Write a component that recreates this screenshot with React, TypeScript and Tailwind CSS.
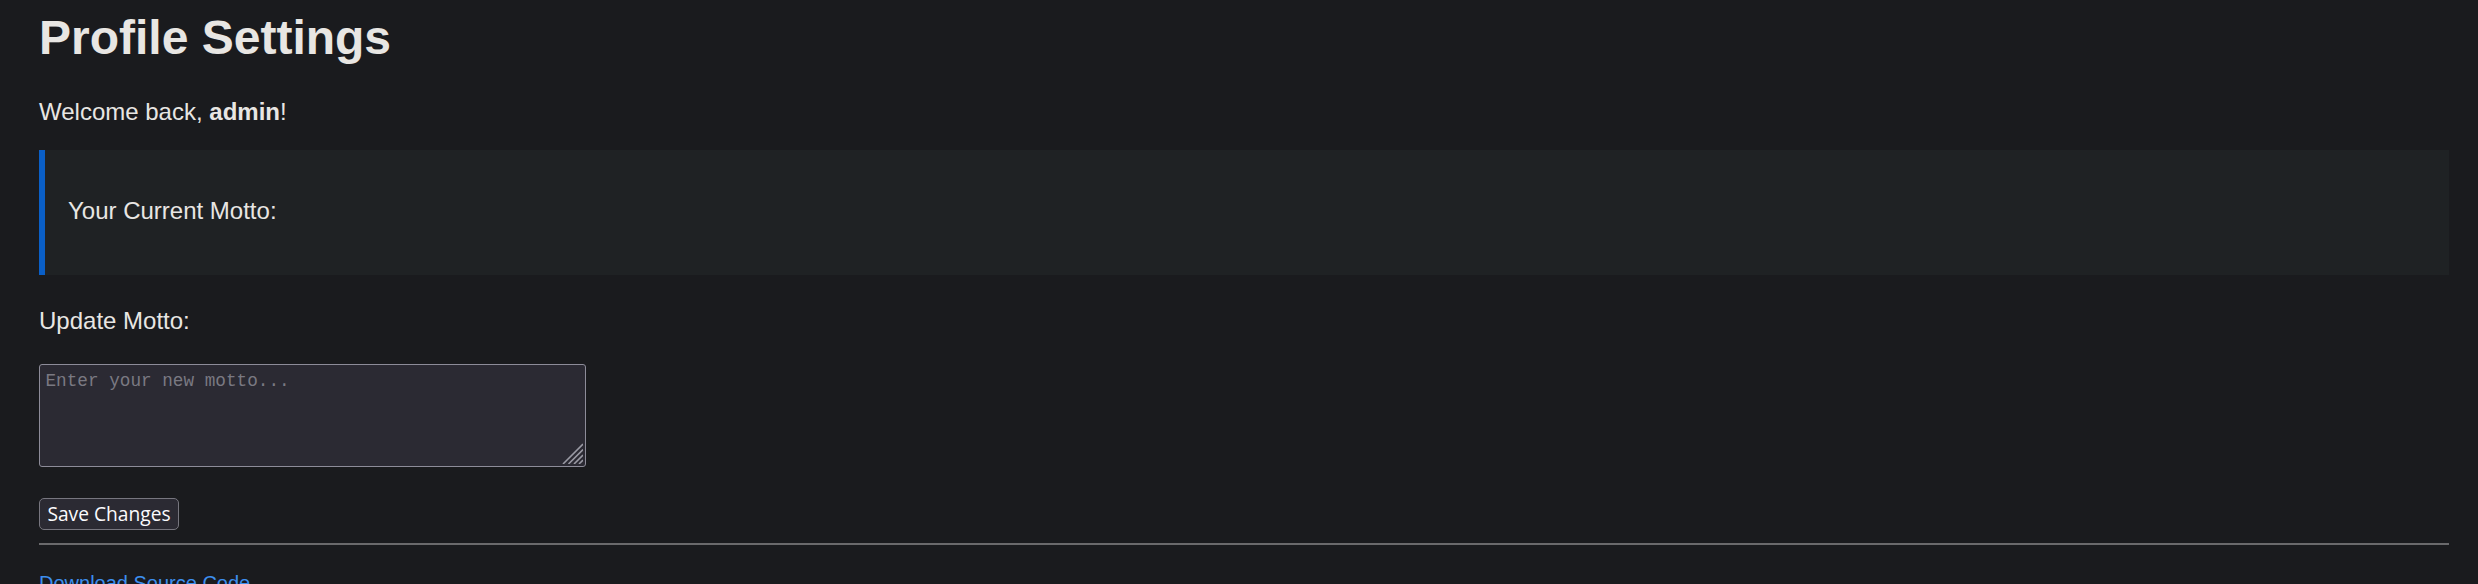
export default function App() {
    return (
        <div className="min-h-screen bg-[#1a1b1e] text-[#e8e6e3] font-['Liberation_Sans',Arial,sans-serif] text-[24px] overflow-hidden">
            <div className="pl-[39px] pr-[29px] pt-[10px]">
                <h1 className="text-[48px] font-bold leading-[55px]">Profile Settings</h1>

                <p className="mt-[33px] leading-[27.6px]">
                    Welcome back, <strong className="font-bold">admin</strong>!
                </p>

                {/* Current motto */}
                <div className="mt-[24px] bg-[#1f2224] border-l-[6px] border-[#0a5fc7] pl-[23px] pt-[47px] pb-[50.5px]">
                    <p className="leading-[27.6px]">Your Current Motto: <span></span></p>
                </div>

                <label className="block mt-[32px] leading-[27.6px]">Update Motto:</label>

                <div className="relative mt-[30px] w-[547px] h-[103px]">
                    <textarea
                        placeholder="Enter your new motto..."
                        className="block w-full h-full resize-none bg-[#2b2a33] border-[1.5px] border-[#8d8c99] rounded-[3px] pl-[5.5px] pt-[6px] text-[17.7px] leading-[20px] font-['Liberation_Mono','DejaVu_Sans_Mono',monospace] text-[#fbfbfe] placeholder:text-[#7a7982] outline-none"
                    />
                    <svg className="absolute right-[3px] bottom-[3px] pointer-events-none" width="21" height="21" viewBox="0 0 21 21">
                        <g stroke="#9a9aa4" strokeWidth="1.6">
                            <line x1="21" y1="1" x2="1" y2="21" />
                            <line x1="21" y1="6.5" x2="6.5" y2="21" />
                            <line x1="21" y1="12" x2="12" y2="21" />
                            <line x1="21" y1="17" x2="17" y2="21" />
                        </g>
                    </svg>
                </div>

                <button className="block mt-[31px] w-[140px] h-[32px] bg-[#2b2a33] border-[1.5px] border-[#77767f] rounded-[5px] text-[19.2px] leading-[22px] font-['Open_Sans','Noto_Sans',sans-serif] text-[#fbfbfe]">
                    Save Changes
                </button>

                <div className="mt-[12.7px] h-[2px] bg-[#6a6a6c]"></div>

                <p className="mt-[27px] text-[20px] leading-[23px]">
                    <a href="#" className="text-[#3d8fef] underline">Download Source Code</a>
                </p>
            </div>
        </div>
    );
}
